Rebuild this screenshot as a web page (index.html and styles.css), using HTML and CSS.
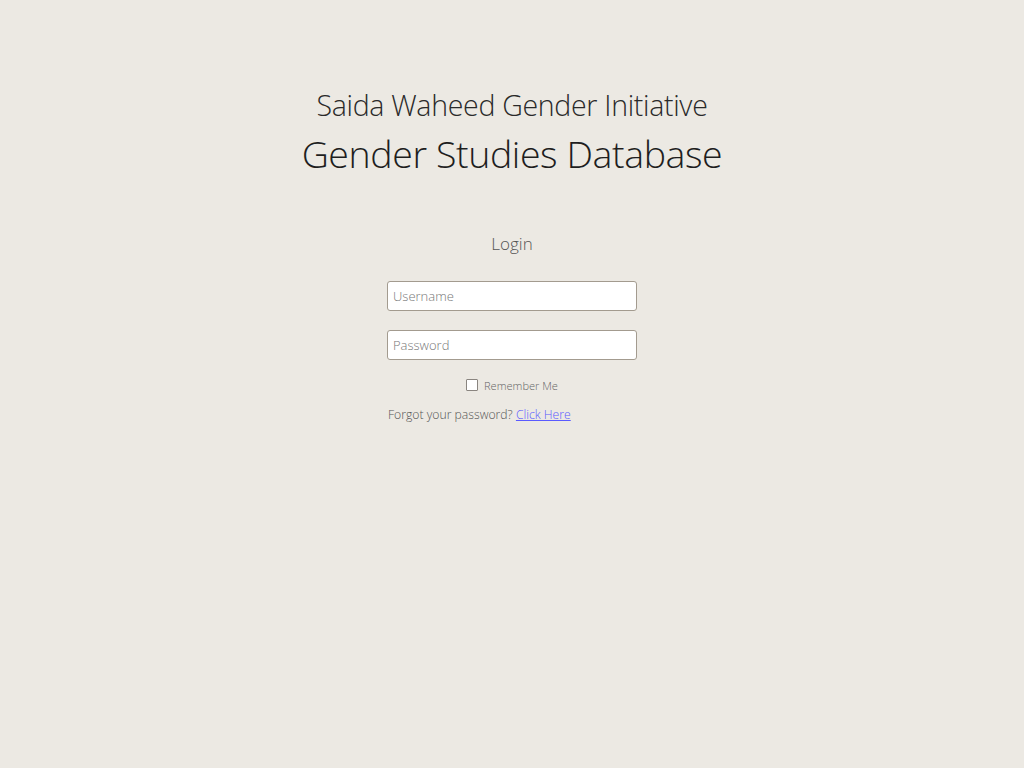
FILE: index.html
```html
<!DOCTYPE html>
<html>
<head>
<meta charset="utf-8">
<link rel="stylesheet" href="styles.css">
</head>
<body>
<header class="hero">
  <div class="org">Saida Waheed Gender Initiative</div>
  <h1 class="title">Gender Studies Database</h1>
</header>
<main class="login">
  <h2 class="login-title">Login</h2>
  <form class="login-form">
    <input class="field" type="text" placeholder="Username">
    <input class="field" type="password" placeholder="Password">
    <label class="remember"><span class="box"></span>Remember Me</label>
    <p class="forgot">Forgot your password? <a href="#">Click Here</a></p>
  </form>
</main>
</body>
</html>
```
FILE: styles.css
```css
html, body {
  margin: 0;
  padding: 0;
}
body {
  background: #ece9e3;
  font-family: "Open Sans", "Noto Sans", sans-serif;
  font-weight: 300;
  color: #222;
  height: 768px;
}
.hero {
  display: flex;
  flex-direction: column;
  align-items: center;
  padding-top: 86px;
}
.org {
  font-size: 28.5px;
  line-height: 38px;
  color: #2a2a2a;
  letter-spacing: -0.3px;
}
.title {
  margin: 5px 0 0 0;
  font-weight: 300;
  font-size: 37.5px;
  line-height: 50px;
  color: #1e1e1e;
  letter-spacing: -0.4px;
}
.login {
  display: flex;
  flex-direction: column;
  align-items: center;
  padding-top: 53px;
}
.login-title {
  margin: 0;
  font-weight: 300;
  font-size: 17px;
  line-height: 24px;
  color: #555;
}
.login-form {
  width: 250px;
  display: flex;
  flex-direction: column;
  padding-top: 25px;
}
.field {
  box-sizing: border-box;
  width: 250px;
  height: 30px;
  border: 1px solid #a39b8f;
  border-radius: 3px;
  background: #fff;
  padding: 0 5px;
  font-family: inherit;
  font-weight: 300;
  font-size: 13px;
  color: #333;
  margin: 0 0 19px 0;
  outline: none;
}
.field::placeholder {
  color: #777;
}
.remember {
  align-self: center;
  display: flex;
  align-items: center;
  gap: 6px;
  font-size: 11.1px;
  color: #666;
  margin-top: -3px;
  height: 18px;
}
.box {
  width: 10px;
  height: 10px;
  border: 1px solid #8a8580;
  border-radius: 1px;
  background: #fff;
  display: inline-block;
}
.forgot {
  margin: 13px 0 0 1px;
  font-size: 12.2px;
  line-height: 16px;
  color: #555;
}
.forgot a {
  color: #5a5aff;
}
```
